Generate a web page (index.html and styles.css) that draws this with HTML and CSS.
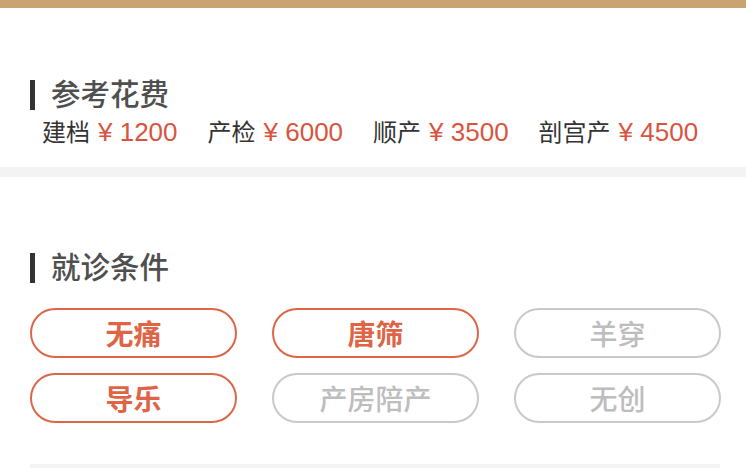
FILE: index.html
```html
<!DOCTYPE html>
<html lang="zh-CN">
<head>
<meta charset="utf-8">
<link rel="stylesheet" href="styles.css">
</head>
<body>
<div class="topbar"></div>
<section class="card cost">
  <h2 class="title">参考花费</h2>
  <div class="cost-row">
    <span class="item">建档<em>¥ 1200</em></span>
    <span class="item">产检<em>¥ 6000</em></span>
    <span class="item">顺产<em>¥ 3500</em></span>
    <span class="item">剖宫产<em>¥ 4500</em></span>
  </div>
</section>
<div class="divider"></div>
<section class="card cond">
  <h2 class="title">就诊条件</h2>
  <div class="tags">
    <span class="tag on">无痛</span>
    <span class="tag on">唐筛</span>
    <span class="tag">羊穿</span>
    <span class="tag on">导乐</span>
    <span class="tag">产房陪产</span>
    <span class="tag">无创</span>
  </div>
  <div class="more"></div>
</section>
</body>
</html>
```

FILE: styles.css
```css
* { box-sizing: border-box; }
html, body { margin: 0; padding: 0; background: #fff; }
body {
  width: 746px;
  height: 468px;
  overflow: hidden;
  font-family: "Noto Sans CJK SC", "Noto Sans", sans-serif;
  color: #333;
}
.topbar { height: 8px; background: #caa373; }
.card { background: #fff; padding-left: 30px; }
.cost { padding-top: 69px; padding-bottom: 21px; }
.title {
  margin: 0;
  display: flex;
  align-items: flex-start;
  height: 32px;
  line-height: 30px;
  font-size: 29.5px;
  font-weight: 500;
  color: #4f4f4f;
}
.title::before {
  content: "";
  width: 5px;
  height: 30px;
  margin-top: 3px;
  margin-right: 16px;
  background: #333;
}
.cost-row {
  display: flex;
  gap: 30px;
  padding-left: 12px;
  margin-top: 7px;
  height: 30px;
  line-height: 30px;
  font-size: 24px;
  color: #333;
}
.item em {
  font-family: "Liberation Sans", Arial, sans-serif;
  font-size: 26px;
  font-style: normal;
  color: #d9543f;
  margin-left: 8px;
}
.divider { height: 10px; background: #f3f3f3; }
.cond { padding-top: 73px; }
.tags {
  margin-top: 26px;
  display: grid;
  grid-template-columns: repeat(3, 207px);
  column-gap: 35px;
  row-gap: 15px;
}
.tag {
  height: 50px;
  border: 2px solid #c9c9c9;
  border-radius: 25px;
  display: flex;
  align-items: center;
  justify-content: center;
  font-size: 28px;
  font-weight: 500;
  color: #bdbdbd;
}
.tag.on {
  border-color: #dc6648;
  color: #de6445;
  font-weight: 700;
}
.more {
  margin-top: 41px;
  width: 690px;
  height: 5px;
  background: #f4f4f4;
}
```
